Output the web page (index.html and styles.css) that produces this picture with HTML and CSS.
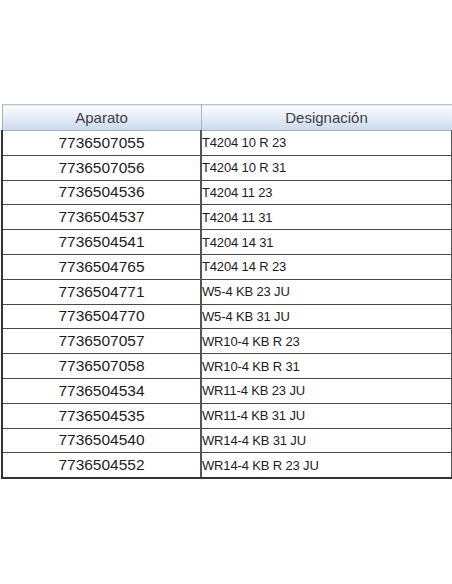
FILE: index.html
```html
<!DOCTYPE html>
<html lang="es">
<head>
<meta charset="utf-8">
<link rel="stylesheet" href="styles.css">
</head>
<body>
<div class="page">
  <table class="grid">
    <colgroup><col class="c1"><col class="c2"></colgroup>
    <thead>
      <tr><th>Aparato</th><th>Designación</th></tr>
    </thead>
    <tbody>
      <tr><td class="num">7736507055</td><td>T4204 10 R 23</td></tr>
      <tr><td class="num">7736507056</td><td>T4204 10 R 31</td></tr>
      <tr><td class="num">7736504536</td><td>T4204 11 23</td></tr>
      <tr><td class="num">7736504537</td><td>T4204 11 31</td></tr>
      <tr><td class="num">7736504541</td><td>T4204 14 31</td></tr>
      <tr><td class="num">7736504765</td><td>T4204 14 R 23</td></tr>
      <tr><td class="num">7736504771</td><td>W5-4 KB 23 JU</td></tr>
      <tr><td class="num">7736504770</td><td>W5-4 KB 31 JU</td></tr>
      <tr><td class="num">7736507057</td><td>WR10-4 KB R 23</td></tr>
      <tr><td class="num">7736507058</td><td>WR10-4 KB R 31</td></tr>
      <tr><td class="num">7736504534</td><td>WR11-4 KB 23 JU</td></tr>
      <tr><td class="num">7736504535</td><td>WR11-4 KB 31 JU</td></tr>
      <tr><td class="num">7736504540</td><td>WR14-4 KB 31 JU</td></tr>
      <tr><td class="num">7736504552</td><td>WR14-4 KB R 23 JU</td></tr>
    </tbody>
  </table>
</div>
</body>
</html>
```

FILE: styles.css
```css
html, body {
  margin: 0;
  padding: 0;
  background: #ffffff;
}
.page {
  padding: 104px 0 0 0;
  width: 452px;
  height: 584px;
  box-sizing: border-box;
}
.grid {
  margin-left: 1px;
  width: 450px;
  table-layout: fixed;
  border-collapse: collapse;
  font-family: "Liberation Sans", Arial, sans-serif;
  font-size: 13px;
  letter-spacing: -0.15px;
  color: #1c1c1c;
}
.c1 { width: 199px; }
.c2 { width: 251px; }
.grid th {
  height: 25px;
  padding: 0;
  font-weight: normal;
  font-size: 15px;
  letter-spacing: 0;
  color: #404040;
  background: linear-gradient(to bottom, #fbfcfe 0%, #e6eef8 45%, #c9d9ec 100%);
  border: 1px solid #a4b3c4;
  border-top-color: #b7c4d2;
  text-align: center;
  vertical-align: middle;
}
.grid td {
  height: 23.8px;
  padding: 0;
  border-top: 1px solid #4a4a4a;
  border-bottom: 1px solid #4a4a4a;
  border-left: 2px solid #555555;
  border-right: 2px solid #555555;
  vertical-align: middle;
  white-space: nowrap;
}
.grid td.num {
  text-align: center;
  font-size: 15.5px;
  letter-spacing: 0;
  border-left: 2px solid #333333;
}
.grid tbody tr:last-child td {
  border-bottom: 2px solid #333333;
}
```
